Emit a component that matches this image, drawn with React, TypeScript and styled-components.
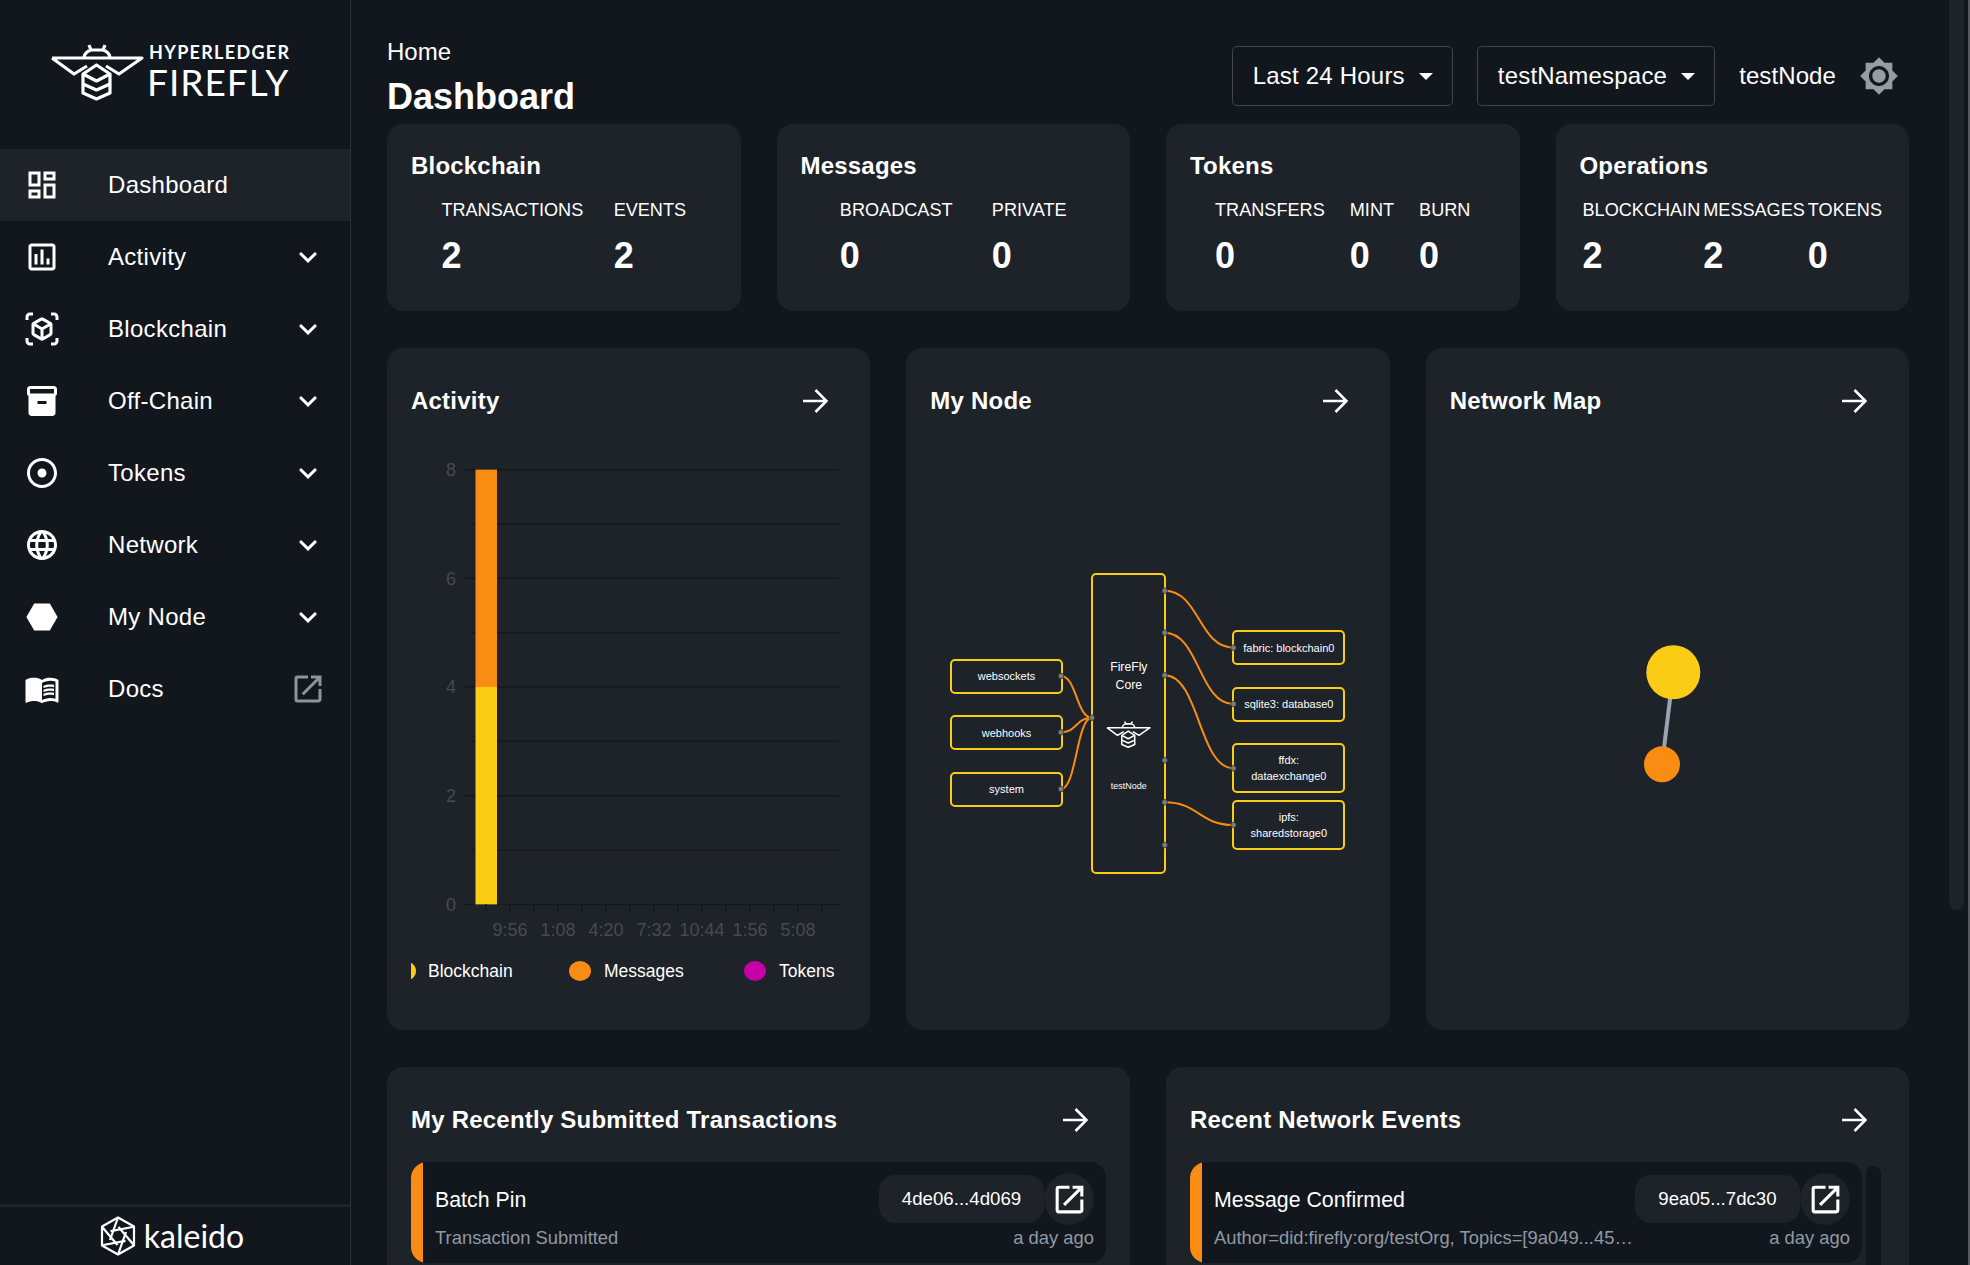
import React from "react";
import styled, { createGlobalStyle } from "styled-components";
import {
  MdOutlineDashboard,
  MdOutlineInsertChart,
  MdOutlineViewInAr,
  MdInventory2,
  MdAdjust,
  MdLanguage,
  MdHexagon,
  MdMenuBook,
  MdExpandMore,
  MdOpenInNew,
  MdBrightness7,
} from "react-icons/md";

const BG = "#12171d";
const PANEL = "#1e2229";
const YELLOW = "#facc15";
const ORANGE = "#f98c12";
const MAGENTA = "#c600a6";
const MUTED = "#8f99a3";

const Global = createGlobalStyle`
  html, body { margin: 0; padding: 0; height: 100%; background: ${BG}; overflow: hidden; }
  #root { height: 100%; }
  * { box-sizing: border-box; }
  body { font-family: "Liberation Sans", Arial, sans-serif; color: #fff; }
`;

const Page = styled.div`
  display: flex;
  height: 1265px;
  width: 1970px;
  background: ${BG};
  overflow: hidden;
`;

/* ---------- sidebar ---------- */
const Sidebar = styled.aside`
  flex: 0 0 351px;
  display: flex;
  flex-direction: column;
  border-right: 1px solid #2b2f36;
`;
const LogoBar = styled.div`
  height: 149px;
  padding: 42px 0 0 50px;
  display: flex;
  gap: 5px;
  align-items: flex-start;
`;
const BeeBox = styled.div`
  padding-top: 2px;
  line-height: 0;
`;
const LogoWords = styled.div`
  display: flex;
  flex-direction: column;
  font-family: Lato, "Liberation Sans", sans-serif;
`;
const LogoTop = styled.span`
  font-size: 18px;
  font-weight: 700;
  line-height: 20px;
  letter-spacing: 1.3px;
`;
const LogoBottom = styled.span`
  font-size: 37px;
  font-weight: 400;
  line-height: 40px;
  letter-spacing: 1px;
  margin-left: -2px;
`;
const Nav = styled.nav`
  display: flex;
  flex-direction: column;
  flex: 1;
`;
const NavRow = styled.div<{ $active?: boolean }>`
  height: 72px;
  display: flex;
  align-items: center;
  padding: 0 24px;
  background: ${(p) => (p.$active ? PANEL : "transparent")};
`;
const NavIcon = styled.span`
  flex: 0 0 36px;
  height: 36px;
  font-size: 36px;
  line-height: 0;
`;
const NavLabel = styled.span`
  flex: 1;
  margin-left: 48px;
  font-size: 24px;
  letter-spacing: 0.3px;
`;
const NavEnd = styled.span<{ $muted?: boolean }>`
  flex: 0 0 36px;
  height: 36px;
  font-size: 36px;
  line-height: 0;
  color: ${(p) => (p.$muted ? "#8d949c" : "#fff")};
`;
const SideFooter = styled.div`
  height: 61px;
  border-top: 3px solid ${PANEL};
  display: flex;
  align-items: center;
  justify-content: center;
  gap: 8px;
  padding-right: 6px;
`;
const KaleidoText = styled.span`
  font-family: Lato, "Liberation Sans", sans-serif;
  font-size: 32px;
  font-weight: 400;
  line-height: 1;
`;

/* ---------- main ---------- */
const Main = styled.main`
  flex: 1;
  min-width: 0;
  padding: 0 40px 0 36px;
  overflow: hidden;
`;
const PageScrollGutter = styled.div`
  flex: 0 0 21px;
  padding-right: 4px;
  border-right: 2px solid #55585c;
`;
const PageScrollThumb = styled.div`
  width: 15px;
  height: 910px;
  background: ${PANEL};
  border-radius: 0 0 8px 8px;
`;
const Header = styled.header`
  height: 124px;
  display: flex;
  justify-content: space-between;
  align-items: flex-start;
`;
const Titles = styled.div`
  padding-top: 38px;
`;
const Crumb = styled.div`
  font-size: 24px;
  line-height: 28px;
`;
const PageTitle = styled.h1`
  margin: 10px 0 0;
  font-size: 36px;
  line-height: 42px;
  font-weight: 700;
`;
const Controls = styled.div`
  display: flex;
  align-items: center;
  margin: 46px 10px 0 0;
`;
const SelectBox = styled.div`
  height: 60px;
  padding: 0 19px 0 20px;
  margin-right: 24px;
  display: flex;
  align-items: center;
  gap: 14px;
  font-size: 24px;
  letter-spacing: 0.2px;
  border: 1px solid #41454b;
  border-radius: 5px;
`;
const Caret = styled.span`
  width: 0;
  height: 0;
  border-left: 7px solid transparent;
  border-right: 7px solid transparent;
  border-top: 7px solid #fff;
`;
const NodeName = styled.span`
  font-size: 24px;
  letter-spacing: 0.1px;
  margin-right: 23px;
`;
const ThemeIcon = styled.span`
  font-size: 40px;
  line-height: 0;
  color: #959ca4;
`;

const StatGrid = styled.div`
  display: grid;
  grid-template-columns: repeat(4, 1fr);
  gap: 36px;
`;
const Card = styled.section`
  background: ${PANEL};
  border-radius: 16px;
`;
const StatCard = styled(Card)`
  height: 187px;
  padding: 28px 24px 0;
`;
const StatTitle = styled.h2`
  margin: 0;
  font-size: 24px;
  line-height: 28px;
  font-weight: 700;
  letter-spacing: 0.2px;
`;
const StatRow = styled.div`
  display: flex;
  justify-content: space-evenly;
  margin-top: 19px;
`;
const StatCol = styled.div`
  display: flex;
  flex-direction: column;
`;
const StatLabel = styled.span`
  font-size: 18.13px;
  line-height: 22px;
  white-space: nowrap;
`;
const StatValue = styled.span`
  font-size: 36px;
  font-weight: 700;
  line-height: 42px;
  margin-top: 14px;
`;

const MidGrid = styled.div`
  display: grid;
  grid-template-columns: repeat(3, 1fr);
  gap: 36px;
  margin-top: 37px;
`;
const MidCard = styled(Card)`
  height: 682px;
`;
const CardHead = styled.div<{ $h: number }>`
  height: ${(p) => p.$h}px;
  padding: 37px 42px 0 24px;
  display: flex;
  justify-content: space-between;
  align-items: flex-start;
`;
const CardTitle = styled.h2`
  margin: 0;
  font-size: 24px;
  line-height: 32px;
  font-weight: 700;
  letter-spacing: 0.22px;
`;
const ArrowSvg = styled.svg`
  width: 25px;
  height: 24px;
  margin-top: 4px;
  fill: none;
  stroke: #fff;
  stroke-width: 2.6;
`;
const ChartSvg = styled.svg`
  display: block;
  width: 483px;
  height: 497px;
  font-family: "Liberation Sans", Arial, sans-serif;
`;
const Legend = styled.div`
  display: grid;
  grid-template-columns: 158px 175px auto;
  padding-left: 24px;
  height: 40px;
  align-items: center;
`;
const LegendItem = styled.div`
  display: flex;
  align-items: center;
  gap: 13px;
  font-size: 17.5px;
`;
const LegendDot = styled.span<{ $c: string }>`
  width: 22px;
  height: 20px;
  border-radius: 50%;
  background: ${(p) => p.$c};
`;
const ClippedDot = styled.span<{ $c: string }>`
  position: relative;
  width: 5px;
  height: 16px;
  overflow: hidden;
  margin-right: -1px;
  &::before {
    content: "";
    position: absolute;
    right: 0;
    top: -2px;
    width: 22px;
    height: 20px;
    border-radius: 50%;
    background: ${(p) => p.$c};
  }
`;

/* diagram */
const Diagram = styled.div`
  position: relative;
  height: 576px;
`;
const DiagramWires = styled.svg`
  position: absolute;
  inset: 0;
  width: 484px;
  height: 576px;
`;
const DiagramNode = styled.div<{ $x: number; $y: number; $w: number; $h: number }>`
  position: absolute;
  left: ${(p) => p.$x}px;
  top: ${(p) => p.$y}px;
  width: ${(p) => p.$w}px;
  height: ${(p) => p.$h}px;
  border: 2px solid ${YELLOW};
  border-radius: 5px;
  display: flex;
  align-items: center;
  justify-content: center;
  text-align: center;
  font-size: 11px;
  line-height: 16px;
`;
const CoreNode = styled(DiagramNode)`
  display: block;
`;
const CoreName = styled.div`
  margin-top: 83px;
  font-size: 12.2px;
  line-height: 18px;
`;
const CoreBee = styled.div`
  margin-top: 27px;
  line-height: 0;
`;
const CoreSub = styled.div`
  margin-top: 31px;
  font-size: 9px;
  line-height: 12px;
`;
const MapSvg = styled.svg`
  display: block;
  width: 483px;
  height: 576px;
`;

/* bottom */
const BottomGrid = styled.div`
  display: grid;
  grid-template-columns: repeat(2, 1fr);
  gap: 36px;
  margin-top: 37px;
`;
const BottomCard = styled(Card)`
  height: 460px;
`;
const ListWrap = styled.div`
  display: flex;
  padding: 0 24px;
`;
const Item = styled.div`
  flex: 1;
  min-width: 0;
  height: 101px;
  padding: 11px 12px 0 24px;
  border-radius: 16px;
  background: ${BG};
  position: relative;
  overflow: hidden;
  &::before {
    content: "";
    position: absolute;
    left: 0;
    top: 0;
    bottom: 0;
    width: 12px;
    background: ${ORANGE};
  }
`;
const ItemTop = styled.div`
  display: flex;
  height: 52px;
  align-items: center;
  justify-content: space-between;
`;
const ItemTitle = styled.span`
  font-size: 21.33px;
  padding-top: 2px;
`;
const ItemActions = styled.div`
  display: flex;
  align-items: center;
`;
const HashPill = styled.span`
  height: 48px;
  width: 165px;
  border-radius: 16px;
  background: ${PANEL};
  display: flex;
  align-items: center;
  justify-content: center;
  font-size: 18.67px;
`;
const OpenButton = styled.span`
  width: 50px;
  height: 52px;
  border-radius: 50%;
  background: ${PANEL};
  display: flex;
  align-items: center;
  justify-content: center;
  font-size: 37px;
`;
const ItemBottom = styled.div`
  display: flex;
  height: 25px;
  padding-top: 1px;
  align-items: center;
  justify-content: space-between;
  font-size: 18.4px;
  color: ${MUTED};
`;
const ItemSub = styled.span`
  white-space: nowrap;
`;
const ListGutter = styled.div`
  flex: 0 0 23px;
  padding: 4px 4px 0;
`;
const ListThumb = styled.div`
  height: 300px;
  border-radius: 8px;
  background: ${BG};
`;

/* ---------- drawings ---------- */
const Bee = ({ width }: { width: number }) => (
  <svg width={width} viewBox="0 0 94 57" fill="none" stroke="#fff" strokeWidth={3.2} strokeLinejoin="round">
    <path d="M2 14 H92 L69 30 L56 22 M2 14 L24 30 L37 22" />
    <path d="M34 13 Q35 8 41 6 H53 Q59 8 60 13 M41 6 L39 1 M53 6 L55 1" />
    <path d="M33 30 L46.5 21 L60 30 V49 L46.5 55 L33 49 Z" />
    <path d="M33 30 L46.5 37 L60 30 M33 40 L46.5 46 L60 40" />
  </svg>
);

const KaleidoMark = () => (
  <svg width="36" height="40" viewBox="0 0 36 40" fill="none" stroke="#fff" strokeWidth={2.2} strokeLinejoin="round">
    <path d="M18 1.5 L34 10.5 V29.5 L18 38.5 L2 29.5 V10.5 Z" />
    {[0, 60, 120, 180, 240, 300].map((a) => (
      <path key={a} d="M18 1.5 L10 24" transform={`rotate(${a} 18 20)`} />
    ))}
  </svg>
);

const Arrow = () => (
  <ArrowSvg viewBox="0 0 25 24">
    <path d="M0 12 H23 M12.5 1 L23.5 12 L12.5 23" />
  </ArrowSvg>
);

const gridYs = Array.from({ length: 9 }, (_, i) => 469.6 + i * 54.34);

const ActivityChart = () => (
  <ChartSvg viewBox="387 454 483 497">
    {gridYs.map((y, i) => (
      <line key={y} x1={i % 2 === 0 ? 463 : 471} x2={839} y1={y} y2={y} stroke={BG} strokeWidth={1.2} />
    ))}
    {["8", "6", "4", "2", "0"].map((t, i) => (
      <text key={t} x={451} y={gridYs[i * 2] + 6.5} fontSize={18} fill="#464b51" textAnchor="middle">
        {t}
      </text>
    ))}
    <rect x={475.5} y={469.6} width={21.5} height={217.4} fill={ORANGE} />
    <rect x={475.5} y={687} width={21.5} height={217.4} fill={YELLOW} />
    {Array.from({ length: 15 }, (_, i) => 486 + i * 24).map((x) => (
      <line key={x} x1={x} x2={x} y1={904} y2={911} stroke={BG} strokeWidth={1.2} />
    ))}
    {[
      ["9:56", 510],
      ["1:08", 558],
      ["4:20", 606],
      ["7:32", 654],
      ["10:44", 702],
      ["1:56", 750],
      ["5:08", 798],
    ].map(([t, x]) => (
      <text key={t as string} x={x as number} y={936} fontSize={18} fill="#464b51" textAnchor="middle">
        {t}
      </text>
    ))}
  </ChartSvg>
);

const OX = 906.3;
const OY = 454;
const wires: [number, number, number, number][] = [
  [1061.3, 676, 1092.3, 717.7],
  [1061.3, 732.3, 1092.3, 717.7],
  [1061.3, 789, 1092.3, 717.7],
  [1165, 590.7, 1233.7, 647.7],
  [1165, 632.7, 1233.7, 704],
  [1165, 675.3, 1233.7, 768.3],
  [1165, 802.3, 1233.7, 825],
];
const handles: [number, number][] = [
  [1092.3, 717.7],
  [1165, 590.7],
  [1165, 632.7],
  [1165, 675.3],
  [1165, 760.3],
  [1165, 802.3],
  [1165, 845],
  [1061.3, 676],
  [1061.3, 732.3],
  [1061.3, 789],
  [1233.7, 647.7],
  [1233.7, 704],
  [1233.7, 768.3],
  [1233.7, 825],
];

const leftNodes = [
  ["websockets", 658.7],
  ["webhooks", 715],
  ["system", 771.7],
] as const;
const rightNodes = [
  ["fabric: blockchain0", 630.3, 35],
  ["sqlite3: database0", 686.7, 35],
  ["ffdx:\ndataexchange0", 743.3, 50],
  ["ipfs:\nsharedstorage0", 800, 50],
] as const;

const NodeText = styled.span`
  white-space: pre-line;
`;

const NodeDiagram = () => (
  <Diagram>
    {leftNodes.map(([t, y]) => (
      <DiagramNode key={t} $x={950 - OX} $y={y - OY} $w={113} $h={35}>
        {t}
      </DiagramNode>
    ))}
    <CoreNode $x={1091.3 - OX} $y={573.3 - OY} $w={75} $h={301}>
      <CoreName>
        FireFly
        <br />
        Core
      </CoreName>
      <CoreBee>
        <Bee width={45} />
      </CoreBee>
      <CoreSub>testNode</CoreSub>
    </CoreNode>
    {rightNodes.map(([t, y, h]) => (
      <DiagramNode key={t} $x={1232.3 - OX} $y={y - OY} $w={113} $h={h}>
        <NodeText>{t}</NodeText>
      </DiagramNode>
    ))}
    <DiagramWires viewBox={`${OX} ${OY} 484 576`}>
      {wires.map(([x1, y1, x2, y2]) => {
        const m = (x1 + x2) / 2;
        return (
          <path
            key={`${x1}${y1}${y2}`}
            d={`M${x1} ${y1} C${m} ${y1} ${m} ${y2} ${x2} ${y2}`}
            fill="none"
            stroke={ORANGE}
            strokeWidth={2}
          />
        );
      })}
      {handles.map(([x, y]) => (
        <circle key={`${x}${y}`} cx={x} cy={y} r={2.8} fill="#7d7d7d" stroke="#23262b" strokeWidth={0.7} />
      ))}
    </DiagramWires>
  </Diagram>
);

const NetworkMap = () => (
  <MapSvg viewBox="1426 454 483 576">
    <line x1={1673.3} y1={672.3} x2={1662} y2={764.3} stroke="#9aa5b1" strokeWidth={4} />
    <circle cx={1673.3} cy={672.3} r={27} fill={YELLOW} />
    <circle cx={1662} cy={764.3} r={18} fill={ORANGE} />
  </MapSvg>
);

const navItems = [
  { label: "Activity", icon: <MdOutlineInsertChart /> },
  { label: "Blockchain", icon: <MdOutlineViewInAr /> },
  { label: "Off-Chain", icon: <MdInventory2 /> },
  { label: "Tokens", icon: <MdAdjust /> },
  { label: "Network", icon: <MdLanguage /> },
  { label: "My Node", icon: <MdHexagon /> },
];

const statCards = [
  { title: "Blockchain", stats: [["TRANSACTIONS", "2"], ["EVENTS", "2"]] },
  { title: "Messages", stats: [["BROADCAST", "0"], ["PRIVATE", "0"]] },
  { title: "Tokens", stats: [["TRANSFERS", "0"], ["MINT", "0"], ["BURN", "0"]] },
  { title: "Operations", stats: [["BLOCKCHAIN", "2"], ["MESSAGES", "2"], ["TOKENS", "0"]] },
];

export default function App() {
  return (
    <Page>
      <Global />
      <Sidebar>
        <LogoBar>
          <BeeBox>
            <Bee width={94} />
          </BeeBox>
          <LogoWords>
            <LogoTop>HYPERLEDGER</LogoTop>
            <LogoBottom>FIREFLY</LogoBottom>
          </LogoWords>
        </LogoBar>
        <Nav>
          <NavRow $active>
            <NavIcon>
              <MdOutlineDashboard />
            </NavIcon>
            <NavLabel>Dashboard</NavLabel>
          </NavRow>
          {navItems.map((n) => (
            <NavRow key={n.label}>
              <NavIcon>{n.icon}</NavIcon>
              <NavLabel>{n.label}</NavLabel>
              <NavEnd>
                <MdExpandMore />
              </NavEnd>
            </NavRow>
          ))}
          <NavRow>
            <NavIcon>
              <MdMenuBook />
            </NavIcon>
            <NavLabel>Docs</NavLabel>
            <NavEnd $muted>
              <MdOpenInNew />
            </NavEnd>
          </NavRow>
        </Nav>
        <SideFooter>
          <KaleidoMark />
          <KaleidoText>kaleido</KaleidoText>
        </SideFooter>
      </Sidebar>

      <Main>
        <Header>
          <Titles>
            <Crumb>Home</Crumb>
            <PageTitle>Dashboard</PageTitle>
          </Titles>
          <Controls>
            <SelectBox>
              Last 24 Hours
              <Caret />
            </SelectBox>
            <SelectBox>
              testNamespace
              <Caret />
            </SelectBox>
            <NodeName>testNode</NodeName>
            <ThemeIcon>
              <MdBrightness7 />
            </ThemeIcon>
          </Controls>
        </Header>

        <StatGrid>
          {statCards.map((c) => (
            <StatCard key={c.title}>
              <StatTitle>{c.title}</StatTitle>
              <StatRow>
                {c.stats.map(([l, v]) => (
                  <StatCol key={l}>
                    <StatLabel>{l}</StatLabel>
                    <StatValue>{v}</StatValue>
                  </StatCol>
                ))}
              </StatRow>
            </StatCard>
          ))}
        </StatGrid>

        <MidGrid>
          <MidCard>
            <CardHead $h={106}>
              <CardTitle>Activity</CardTitle>
              <Arrow />
            </CardHead>
            <ActivityChart />
            <Legend>
              <LegendItem>
                <ClippedDot $c={YELLOW} />
                Blockchain
              </LegendItem>
              <LegendItem>
                <LegendDot $c={ORANGE} />
                Messages
              </LegendItem>
              <LegendItem>
                <LegendDot $c={MAGENTA} />
                Tokens
              </LegendItem>
            </Legend>
          </MidCard>
          <MidCard>
            <CardHead $h={106}>
              <CardTitle>My Node</CardTitle>
              <Arrow />
            </CardHead>
            <NodeDiagram />
          </MidCard>
          <MidCard>
            <CardHead $h={106}>
              <CardTitle>Network Map</CardTitle>
              <Arrow />
            </CardHead>
            <NetworkMap />
          </MidCard>
        </MidGrid>

        <BottomGrid>
          <BottomCard>
            <CardHead $h={95}>
              <CardTitle>My Recently Submitted Transactions</CardTitle>
              <Arrow />
            </CardHead>
            <ListWrap>
              <Item>
                <ItemTop>
                  <ItemTitle>Batch Pin</ItemTitle>
                  <ItemActions>
                    <HashPill>4de06...4d069</HashPill>
                    <OpenButton>
                      <MdOpenInNew />
                    </OpenButton>
                  </ItemActions>
                </ItemTop>
                <ItemBottom>
                  <ItemSub>Transaction Submitted</ItemSub>
                  <span>a day ago</span>
                </ItemBottom>
              </Item>
            </ListWrap>
          </BottomCard>
          <BottomCard>
            <CardHead $h={95}>
              <CardTitle>Recent Network Events</CardTitle>
              <Arrow />
            </CardHead>
            <ListWrap>
              <Item>
                <ItemTop>
                  <ItemTitle>Message Confirmed</ItemTitle>
                  <ItemActions>
                    <HashPill>9ea05...7dc30</HashPill>
                    <OpenButton>
                      <MdOpenInNew />
                    </OpenButton>
                  </ItemActions>
                </ItemTop>
                <ItemBottom>
                  <ItemSub>Author=did:firefly:org/testOrg, Topics=[9a049...45…</ItemSub>
                  <span>a day ago</span>
                </ItemBottom>
              </Item>
              <ListGutter>
                <ListThumb />
              </ListGutter>
            </ListWrap>
          </BottomCard>
        </BottomGrid>
      </Main>
      <PageScrollGutter>
        <PageScrollThumb />
      </PageScrollGutter>
    </Page>
  );
}
